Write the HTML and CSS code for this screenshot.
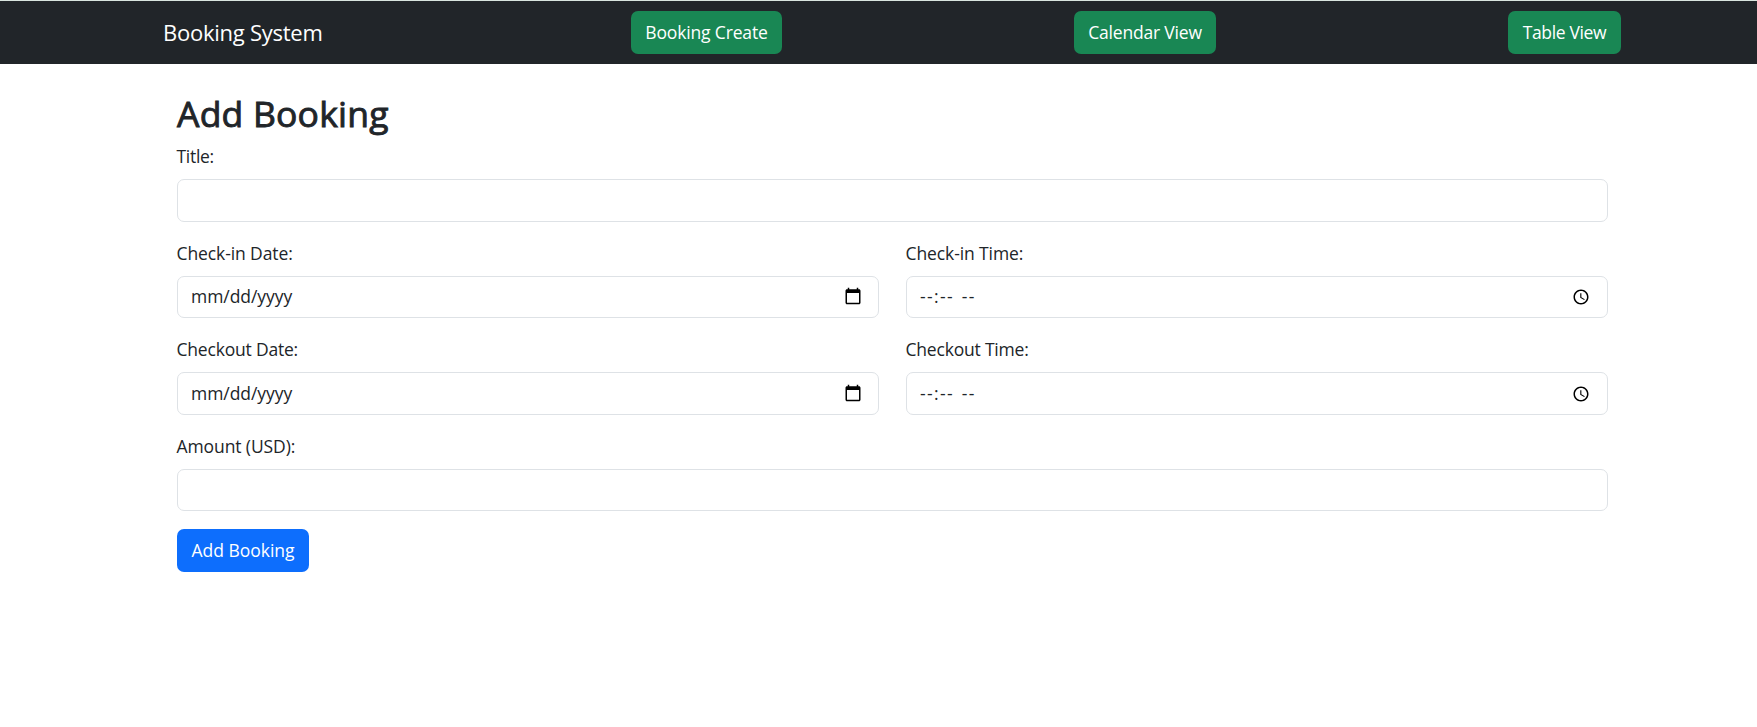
FILE: index.html
```html
<!DOCTYPE html>
<html lang="en">
<head>
<meta charset="utf-8">
<title>Booking System</title>
<link rel="stylesheet" href="styles.css">
</head>
<body>
<svg width="0" height="0" class="defs">
  <symbol id="calendar" viewBox="0 0 24 24"><path d="M20 3h-1V1h-2v2H7V1H5v2H4c-1.100 0-2 .9-2 2v16c0 1.100.9 2 2 2h16c1.100 0 2-.9 2-2V5c0-1.100-.9-2-2-2zm0 18H4V8h16v13z"/></symbol>
  <symbol id="clock" viewBox="0 0 24 24"><path d="M11.990 2C6.470 2 2 6.480 2 12s4.470 10 9.990 10C17.520 22 22 17.520 22 12S17.520 2 11.990 2zM12 20c-4.420 0-8-3.580-8-8s3.580-8 8-8 8 3.580 8 8-3.580 8-8 8zM12.500 7H11v6l5.250 3.150.75-1.230-4.500-2.670z"/></symbol>
</svg>
<nav class="navbar">
  <div class="navbar-inner">
    <a class="brand">Booking System</a>
    <a class="btn btn-green create">Booking Create</a>
    <a class="btn btn-green calendar">Calendar View</a>
    <a class="btn btn-green table">Table View</a>
  </div>
</nav>
<main class="page">
  <h2>Add Booking</h2>
  <form>
    <div class="field"><label class="title">Title:</label><input class="control" type="text"></div>
    <div class="row">
      <div class="field"><label class="in-date">Check-in Date:</label><div class="control"><span class="date">mm/dd/yyyy</span><svg class="icon icon-calendar"><use href="#calendar"/></svg></div></div>
      <div class="field"><label class="in-time">Check-in Time:</label><div class="control"><span class="time"><span>--</span>:<span>--</span> <span class="meridiem">--</span></span><svg class="icon icon-clock"><use href="#clock"/></svg></div></div>
    </div>
    <div class="row">
      <div class="field"><label class="out-date">Checkout Date:</label><div class="control"><span class="date">mm/dd/yyyy</span><svg class="icon icon-calendar"><use href="#calendar"/></svg></div></div>
      <div class="field"><label class="out-time">Checkout Time:</label><div class="control"><span class="time"><span>--</span>:<span>--</span> <span class="meridiem">--</span></span><svg class="icon icon-clock"><use href="#clock"/></svg></div></div>
    </div>
    <div class="field last"><label class="amount">Amount (USD):</label><input class="control" type="text"></div>
    <button class="btn btn-blue" type="button">Add Booking</button>
  </form>
</main>
</body>
</html>
```
FILE: styles.css
```css
* { box-sizing: border-box; }
body {
  margin: 0;
  background: #fff;
  color: #212529;
  font: 400 17.5px/27px "Open Sans", "Noto Sans", sans-serif;
  letter-spacing: -0.2px;
}
.defs { display: block; }
.navbar {
  height: 64px;
  border-top: 1px solid #d9e5de;
  background: #212529;
}
.navbar-inner {
  display: flex;
  align-items: center;
  justify-content: space-between;
  width: 1458px;
  height: 63px;
  margin-left: 163px;
}
.brand {
  width: 176px;
  padding-bottom: 2px;
  color: #fff;
  font-size: 22px;
  line-height: 34px;
  letter-spacing: -0.25px;
  white-space: nowrap;
}
.btn {
  display: flex;
  align-items: center;
  justify-content: center;
  height: 43px;
  border: 0;
  border-radius: 7px;
  color: #fff;
  font: inherit;
  letter-spacing: inherit;
  white-space: nowrap;
}
.btn-green { background: #198754; }
.create { width: 151px; letter-spacing: -0.15px; }
.calendar { width: 142px; letter-spacing: -0.2px; }
.table { width: 113px; letter-spacing: -0.35px; }
.btn-blue { width: 132px; background: #0d6efd; letter-spacing: 0; }
.page { width: 1431px; margin-left: 177px; padding-top: 28px; }
h2 {
  margin: 0 0 7.600px;
  font-size: 35.500px;
  font-weight: 400;
  line-height: 43.200px;
  letter-spacing: 0.2px;
  -webkit-text-stroke: 0.9px #212529;
}
.row { display: grid; grid-template-columns: 1fr 1fr; gap: 27px; }
.field { margin-bottom: 18px; }
label { display: block; height: 27px; margin: 0 0 9px -0.5px; }
.title { letter-spacing: -0.3px; }
.in-date, .in-time { letter-spacing: -0.1px; }
.out-date, .out-time { letter-spacing: -0.2px; }
.amount { letter-spacing: -0.1px; }
.control {
  display: flex;
  align-items: center;
  justify-content: space-between;
  width: 100%;
  height: 42.750px;
  padding: 0 17px 0 13px;
  border: 1px solid #dee2e6;
  border-radius: 7px;
  background: #fff;
}
.last .control { height: 42.200px; }
.date { letter-spacing: -0.05px; }
.time { display: flex; letter-spacing: 1.4px; }
.meridiem { margin-left: 7.500px; }
.icon { width: 18px; height: 18px; fill: #000; }
.icon-calendar { margin: 0 -1px 1px 0; }
```
